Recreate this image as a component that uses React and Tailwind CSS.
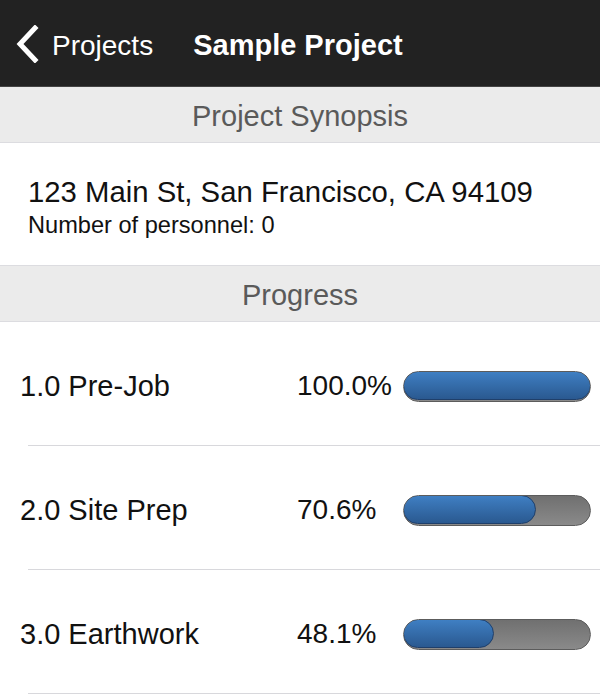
import React from 'react';

const tasks = [
  { name: '1.0 Pre-Job', pct: 100.0 },
  { name: '2.0 Site Prep', pct: 70.6 },
  { name: '3.0 Earthwork', pct: 48.1 },
];

function SectionHeader({ children }) {
  return (
    <div className="h-[56px] bg-[#ebebeb] flex items-center justify-center pt-[5px] text-[29px] text-[#5a5a5a] border-b border-[#dcdce0]">
      {children}
    </div>
  );
}

function ProgressBar({ pct }) {
  return (
    <div className="w-[188px] h-[31px] rounded-full bg-gradient-to-b from-[#707070] to-[#8a8a8a] border border-[#5c5c5c] overflow-hidden flex">
      <div
        className="h-full rounded-full bg-gradient-to-b from-[#3f7fc3] to-[#2a5990] border border-[#1f3f6a] -m-px"
        style={{ width: `calc(${pct}% + 2px)` }}
      />
    </div>
  );
}

export default function App() {
  return (
    <div className="w-[600px] h-[694px] overflow-hidden bg-white font-['Liberation_Sans',Arial,sans-serif]">
      <div className="h-[87px] bg-[#222222] flex items-center pt-[6px] text-white border-b border-[#444]">
        <div className="flex items-center pl-[15px]">
          <svg width="24" height="38" viewBox="0 0 24 38" fill="none" className="-mt-[5px]">
            <path d="M20 3L5 19l15 16" stroke="white" strokeWidth="5" strokeLinecap="square" />
          </svg>
          <span className="ml-[13px] text-[28px]">Projects</span>
        </div>
        <span className="ml-[40px] text-[29px] font-bold">Sample Project</span>
      </div>

      <SectionHeader>Project Synopsis</SectionHeader>

      <div className="h-[123px] flex flex-col justify-center pl-[28px] pt-[8px] border-b border-[#dcdce0]">
        <div className="text-[29.3px] text-[#111] leading-[34px]">123 Main St, San Francisco, CA 94109</div>
        <div className="text-[23.6px] text-[#111] leading-[32px]">Number of personnel: 0</div>
      </div>

      <SectionHeader>Progress</SectionHeader>

      {tasks.map((t) => (
        <div key={t.name} className="pl-[28px]">
          <div className="h-[123px] flex items-center -ml-[8px] pr-[9px] pt-[5px]">
            <span className="w-[277px] text-[29px] text-[#111] translate-y-[1px]">{t.name}</span>
            <span className="flex-1 text-[28px] text-[#111]">{t.pct.toFixed(1)}%</span>
            <ProgressBar pct={t.pct} />
          </div>
          <div className="h-px bg-[#d8d8dc]" />
        </div>
      ))}
    </div>
  );
}
